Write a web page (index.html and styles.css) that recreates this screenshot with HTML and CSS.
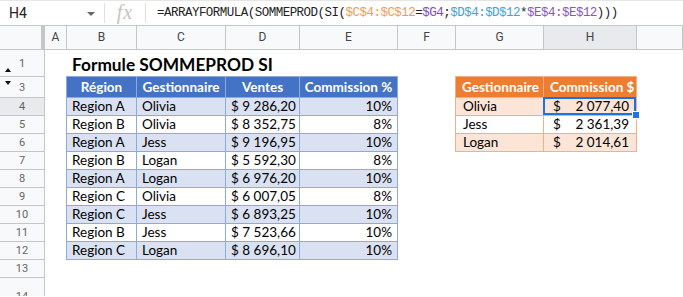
FILE: index.html
```html
<!DOCTYPE html>
<html lang="fr">
<head>
    <meta charset="UTF-8">
    <title>Formule SOMMEPROD SI</title>
    <link rel="stylesheet" href="styles.css">
</head>
<body>
    <div class="formula-bar">
        <div class="name-box">H4</div>
        <div class="name-caret"></div>
        <div class="fx">fx</div>
        <div class="formula">=ARRAYFORMULA(SOMMEPROD(SI(<span class="ref-c">$C$4:$C$12</span>=<span class="ref-g">$G4</span>;<span class="ref-d">$D$4:$D$12</span>*<span class="ref-e">$E$4:$E$12</span>)))</div>
    </div>

    <div class="sheet top-rows">
        <!-- column headers -->
        <div class="corner"></div>
        <div class="col-head">A</div>
        <div class="col-head">B</div>
        <div class="col-head">C</div>
        <div class="col-head">D</div>
        <div class="col-head">E</div>
        <div class="col-head">F</div>
        <div class="col-head">G</div>
        <div class="col-head selected">H</div>
        <div class="col-head"></div>

        <!-- row 1 -->
        <div class="row-head"><span class="hide-up"></span>1</div>
        <div class="cell"></div>
        <div class="cell title">Formule SOMMEPROD SI</div>
        <div class="cell"></div>
        <div class="cell"></div>
        <div class="cell"></div>
        <div class="cell"></div>
        <div class="cell"></div>
        <div class="cell"></div>
        <div class="cell"></div>

        <!-- row 3 -->
        <div class="row-head"><span class="hide-down"></span>3</div>
        <div class="cell"></div>
        <div class="cell bh first top">Région</div>
        <div class="cell bh top">Gestionnaire</div>
        <div class="cell bh top">Ventes</div>
        <div class="cell bh top">Commission %</div>
        <div class="cell"></div>
        <div class="cell oh first top">Gestionnaire</div>
        <div class="cell oh top">Commission $</div>
        <div class="cell"></div>
    </div>
    <div class="sheet" id="rows"></div>

    <script>
        var sales = [
            ['Region A', 'Olivia', '$ 9 286,20', '10%'],
            ['Region B', 'Olivia', '$ 8 352,75', '8%'],
            ['Region A', 'Jess', '$ 9 196,95', '10%'],
            ['Region B', 'Logan', '$ 5 592,30', '8%'],
            ['Region A', 'Logan', '$ 6 976,20', '10%'],
            ['Region C', 'Olivia', '$ 6 007,05', '8%'],
            ['Region C', 'Jess', '$ 6 893,25', '10%'],
            ['Region B', 'Jess', '$ 7 523,66', '10%'],
            ['Region C', 'Logan', '$ 8 696,10', '10%']
        ];
        var totals = [
            ['Olivia', '2 077,40'],
            ['Jess', '2 361,39'],
            ['Logan', '2 014,61']
        ];

        function cell(cls, text) {
            return '<div class="cell ' + cls + '">' + (text || '') + '</div>';
        }

        function buildRows() {
            var html = '';
            for (var r = 0; r < 11; r++) {
                var num = r + 4;
                html += '<div class="row-head' + (num === 4 ? ' selected' : '') + (num === 14 ? ' tall' : '') + '">' + num + '</div>';
                html += cell('');
                var s = sales[r];
                if (s) {
                    var band = r % 2 === 0 ? ' band' : '';
                    html += cell('bt first' + band, s[0]);
                    html += cell('bt' + band, s[1]);
                    html += cell('bt num' + band, s[2]);
                    html += cell('bt num' + band, s[3]);
                } else {
                    html += cell('') + cell('') + cell('') + cell('');
                }
                html += cell('');
                var t = totals[r];
                if (t) {
                    var oband = r % 2 === 0 ? ' band' : '';
                    html += cell('ot first' + oband, t[0]);
                    html += '<div class="cell ot money' + oband + (r === 0 ? ' active' : '') + '"><span>$</span><span>' + t[1] + '</span></div>';
                } else {
                    html += cell('') + cell('');
                }
                html += cell('');
            }
            document.getElementById('rows').innerHTML = html;
        }

        buildRows();
    </script>
</body>
</html>
```

FILE: styles.css
```css
body, html {
    margin: 0;
    padding: 0;
    background: #fff;
    overflow: hidden;
}

/* formula bar */
.formula-bar {
    display: flex;
    align-items: center;
    border-top: 1px solid #e6e6e6;
    border-bottom: 1px solid #c7c7c7;
    box-sizing: border-box;
    height: 26px;
    font-family: Roboto, Arial, sans-serif;
}
.name-box {
    width: 78px;
    padding-left: 9px;
    font-size: 14px;
    color: #222;
}
.name-caret {
    width: 0;
    height: 0;
    border-left: 4px solid transparent;
    border-right: 4px solid transparent;
    border-top: 4px solid #666;
    margin-right: 9px;
    margin-top: 2px;
}
.fx {
    border-left: 1px solid #e0e0e0;
    border-right: 1px solid #e0e0e0;
    height: 20px;
    width: 40px;
    text-align: center;
    line-height: 19px;
    font-family: "Liberation Serif", serif;
    font-style: italic;
    font-size: 20px;
    color: #c4c4c4;
    letter-spacing: 1px;
}
.formula {
    padding-left: 11px;
    font-family: "Liberation Mono", monospace;
    font-size: 12.5px;
    letter-spacing: -0.52px;
    color: #222;
}
.ref-c { color: #f39b4e; }
.ref-g { color: #7b49c6; }
.ref-d { color: #3ea2d8; }
.ref-e { color: #8a54c4; }

/* grid (gridlines hidden, like the sheet) */
.sheet {
    display: grid;
    grid-template-columns: 45px 22px 70px 89px 74px 98px 58px 88px 93px 1fr;
    grid-auto-rows: 18px;
    font-family: "Lato", "Noto Sans", sans-serif;
}
.sheet.top-rows {
    grid-template-rows: 24px 27px 21px;
}
.cell {
    box-sizing: border-box;
    border-right: 1px solid transparent;
    border-bottom: 1px solid transparent;
    font-size: 13.5px;
    line-height: 17px;
    padding: 0 5px;
    white-space: nowrap;
    color: #000;
    position: relative;
}
.corner {
    background: #f8f9fa;
    border-right: 4px solid #c4c7c5;
    border-bottom: 1px solid #c4c7c5;
    box-sizing: border-box;
}
.col-head {
    box-sizing: border-box;
    background: #f8f9fa;
    border-right: 1px solid #c4c7c5;
    border-bottom: 1px solid #c4c7c5;
    font-family: Roboto, Arial, sans-serif;
    font-size: 12px;
    color: #444;
    text-align: center;
    line-height: 23px;
}
.row-head {
    box-sizing: border-box;
    background: #f8f9fa;
    border-right: 1px solid #c4c7c5;
    border-bottom: 1px solid #c4c7c5;
    font-family: Roboto, Arial, sans-serif;
    font-size: 11px;
    color: #666;
    text-align: center;
    display: flex;
    align-items: center;
    justify-content: center;
    position: relative;
}
.col-head.selected, .row-head.selected {
    background: #e8eaed;
}
.row-head.tall {
    height: 34px;
    padding-top: 4px;
}
.hide-up, .hide-down {
    position: absolute;
    left: 5px;
    width: 0;
    height: 0;
    border-left: 3.5px solid transparent;
    border-right: 3.5px solid transparent;
}
.hide-up {
    bottom: 4px;
    border-bottom: 4px solid #111;
}
.hide-down {
    top: 4px;
    border-top: 4px solid #111;
}

.title {
    font-weight: bold;
    font-size: 17.3px;
    line-height: 18px;
    padding-top: 6px;
    overflow: visible;
    z-index: 1;
}

/* blue table */
.bh, .bt {
    border-right-color: #8ea9db;
    border-bottom-color: #8ea9db;
}
.bh {
    background: #4472c4;
    color: #fff;
    font-weight: bold;
    text-align: center;
    line-height: 20px;
    padding: 0 2px;
}
.bt.band {
    background: #d9e1f2;
}
.bt.num {
    text-align: right;
}
.bh.first, .bt.first {
    box-shadow: -1px 0 0 #8ea9db;
}
.bh.top {
    box-shadow: 0 -1px 0 #8ea9db;
}
.bh.first.top {
    box-shadow: -1px 0 0 #8ea9db, 0 -1px 0 #8ea9db, -1px -1px 0 #8ea9db;
}

/* orange table */
.oh, .ot {
    border-right-color: #f4b084;
    border-bottom-color: #f4b084;
}
.oh {
    background: #ed7d31;
    color: #fff;
    font-weight: bold;
    line-height: 20px;
    padding: 0 4px 0 6px;
}
.ot.band {
    background: #fce4d6;
}
.ot.first {
    padding-left: 7px;
}
.oh.first, .ot.first {
    box-shadow: -1px 0 0 #f4b084;
}
.oh.top {
    box-shadow: 0 -1px 0 #f4b084;
}
.oh.first.top {
    box-shadow: -1px 0 0 #f4b084, 0 -1px 0 #f4b084, -1px -1px 0 #f4b084;
}
.ot.money {
    display: flex;
    justify-content: space-between;
    padding: 0 7px 0 9px;
}

/* selection */
.active::after {
    content: "";
    position: absolute;
    left: -1px;
    top: -1px;
    right: 0;
    bottom: 0;
    border: 2px solid #1a73e8;
}
.active::before {
    content: "";
    position: absolute;
    right: -4px;
    bottom: -4px;
    width: 6px;
    height: 6px;
    background: #1a73e8;
    border: 1px solid #fff;
    z-index: 2;
}
```
